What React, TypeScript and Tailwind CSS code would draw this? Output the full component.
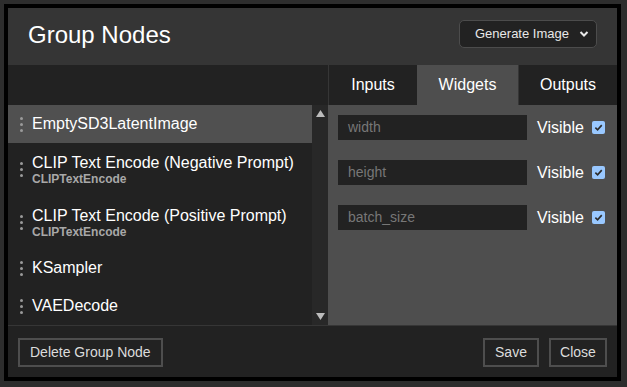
import React from "react";

const font = { fontFamily: '"Liberation Sans", Arial, sans-serif' };

function Dots() {
  return (
    <div className="flex flex-col gap-[3px] w-[3px] shrink-0">
      <div className="w-[3px] h-[3px] rounded-full bg-[#9a9a9a]" />
      <div className="w-[3px] h-[3px] rounded-full bg-[#9a9a9a]" />
      <div className="w-[3px] h-[3px] rounded-full bg-[#9a9a9a]" />
    </div>
  );
}

const items: { name: string; sub?: string; selected?: boolean }[] = [
  { name: "EmptySD3LatentImage", selected: true },
  { name: "CLIP Text Encode (Negative Prompt)", sub: "CLIPTextEncode" },
  { name: "CLIP Text Encode (Positive Prompt)", sub: "CLIPTextEncode" },
  { name: "KSampler" },
  { name: "VAEDecode" },
];

function Check() {
  return (
    <div className="w-[13px] h-[13px] rounded-[2px] bg-[#99c8ff] flex items-center justify-center">
      <svg width="9" height="9" viewBox="0 0 10 10">
        <path d="M1.5 5.2 L4 7.6 L8.6 2.4" stroke="#2b2b2b" strokeWidth="1.8" fill="none" />
      </svg>
    </div>
  );
}

export default function App() {
  return (
    <div className="w-[627px] h-[387px] bg-[#2d2d2d] p-[4px] overflow-hidden" style={font}>
      <div className="w-[617px] h-[377px] border-4 border-black flex flex-col bg-[#222]">
        {/* header */}
        <div className="h-[57px] bg-[#353535] flex items-center justify-between pl-[20px] pr-[20px] shrink-0">
          <div className="text-[24px] text-white leading-none mb-[3px]">Group Nodes</div>
          <div className="w-[138px] h-[28px] mt-[-6px] rounded-[5px] border border-[#4c4c4c] bg-[#222] flex items-center justify-between pl-[15px] pr-[7px]">
            <span className="text-[13px] text-[#e8e8e8]">Generate Image</span>
            <svg width="10" height="8" viewBox="0 0 10 8">
              <path d="M1.5 2 L5 5.5 L8.5 2" stroke="#e8e8e8" strokeWidth="2" fill="none" />
            </svg>
          </div>
        </div>
        {/* body */}
        <div className="flex h-[260px] shrink-0">
          <div className="w-[320px] flex flex-col">
            <div className="h-[40px] bg-[#222]" />
            <div className="flex flex-1">
              <div className="w-[304px] bg-[#222] flex flex-col">
                {items.map((it, i) => (
                  <div
                    key={i}
                    className={`flex items-center gap-[9px] pl-[12px] ${it.sub ? "h-[53px]" : "h-[38px]"} ${it.selected ? "bg-[#505050]" : ""}`}
                  >
                    <Dots />
                    <div className="flex flex-col">
                      <span className="text-[16px] text-white leading-[18px]">{it.name}</span>
                      {it.sub && (
                        <span className="text-[12px] font-bold text-[#a8a8a8] leading-[14px]">{it.sub}</span>
                      )}
                    </div>
                  </div>
                ))}
              </div>
              <div className="w-[16px] bg-[#282828] flex flex-col justify-between items-center py-[5px]">
                <svg width="9" height="7" viewBox="0 0 9 7">
                  <path d="M4.5 0 L9 7 L0 7 Z" fill="#bcbcbc" />
                </svg>
                <svg width="9" height="7" viewBox="0 0 9 7">
                  <path d="M0 0 L9 0 L4.5 7 Z" fill="#bcbcbc" />
                </svg>
              </div>
            </div>
          </div>
          <div className="w-[289px] flex flex-col">
            <div className="h-[40px] flex text-[16px] text-white">
              <div className="w-[89px] flex items-center justify-center bg-[#222] border-l border-[#363636]">Inputs</div>
              <div className="w-[101px] flex items-center justify-center bg-[#4e4e4e]">Widgets</div>
              <div className="w-[99px] flex items-center justify-center bg-[#222] border-l border-[#363636]">Outputs</div>
            </div>
            <div className="flex-1 bg-[#4e4e4e] pl-[10px] pt-[10px] flex flex-col gap-[20px]">
              {["width", "height", "batch_size"].map((w) => (
                <div key={w} className="flex items-center h-[25px]">
                  <div className="w-[189px] h-[25px] bg-[#222] flex items-center pl-[10px] text-[14px] text-[#777]">{w}</div>
                  <span className="ml-[10px] text-[16px] text-white">Visible</span>
                  <div className="ml-[8px]">
                    <Check />
                  </div>
                </div>
              ))}
            </div>
          </div>
        </div>
        {/* footer */}
        <div className="flex-1 border-t border-[#363636] bg-[#222] flex items-start justify-between px-[10px] pt-[12px]">
          <div className="h-[29px] px-[10px] border-2 border-[#4e4e4e] flex items-center text-[14px] text-[#dcdcdc]">Delete Group Node</div>
          <div className="flex gap-[10px]">
            <div className="h-[29px] w-[56px] border-2 border-[#4e4e4e] flex items-center justify-center text-[14px] text-[#dcdcdc]">Save</div>
            <div className="h-[29px] w-[58px] border-2 border-[#4e4e4e] flex items-center justify-center text-[14px] text-[#dcdcdc]">Close</div>
          </div>
        </div>
      </div>
    </div>
  );
}
